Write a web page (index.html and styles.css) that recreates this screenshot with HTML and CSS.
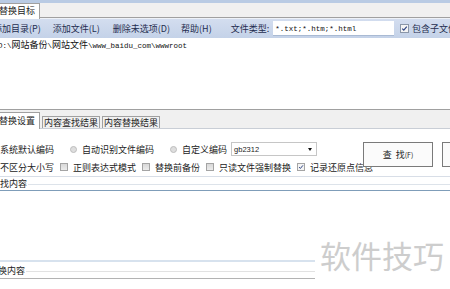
FILE: index.html
```html
<!DOCTYPE html>
<html lang="zh-CN">
<head>
    <meta charset="UTF-8">
    <title>批量替换</title>
    <link rel="stylesheet" href="styles.css">
</head>
<body>
    <div class="app">
        <div class="tabbar-top">
            <div class="tab-top">替换目标</div>
        </div>

        <div class="toolbar">
            <span class="tool first">添加目录(P)</span>
            <span class="tool">添加文件(L)</span>
            <span class="tool third">删除未选项(D)</span>
            <span class="tool help">帮助(H)</span>
            <span class="tool-label">文件类型:</span>
            <div class="type-input"><span class="mono">*.txt;*.htm;*.html</span></div>
            <span class="cb checked light">
                <svg viewBox="0 0 8 8"><path d="M1.4 4.1 L3.2 5.9 L6.6 1.8"/></svg>
            </span>
            <span class="cb-text">包含子文件夹</span>
        </div>

        <div class="filelist">
            <div class="pathline"><span class="mono">D:\</span>网站备份<span class="mono">\</span>网站文件<span class="mono">\www_baidu_com\wwwroot</span></div>
        </div>

        <div class="tabbar-low">
            <div class="tab-low active">替换设置</div>
            <div class="tab-low">内容查找结果</div>
            <div class="tab-low">内容替换结果</div>
        </div>

        <div class="options">
            <div class="opt-col">
                <div class="opt-row">
                    <span class="radio"></span>
                    <span class="opt-text">系统默认编码</span>
                    <span class="radio"></span>
                    <span class="opt-text">自动识别文件编码</span>
                    <span class="radio"></span>
                    <span class="opt-text short">自定义编码</span>
                    <div class="select">
                        <span class="mono-s">gb2312</span>
                        <span class="arrow"></span>
                    </div>
                </div>
                <div class="opt-row second">
                    <span class="cb"></span>
                    <span class="cb-label">不区分大小写</span>
                    <span class="cb"></span>
                    <span class="cb-label">正则表达式模式</span>
                    <span class="cb"></span>
                    <span class="cb-label">替换前备份</span>
                    <span class="cb"></span>
                    <span class="cb-label">只读文件强制替换</span>
                    <span class="cb checked">
                        <svg viewBox="0 0 8 8"><path d="M1.4 4.1 L3.2 5.9 L6.6 1.8"/></svg>
                    </span>
                    <span class="cb-label">记录还原点信息</span>
                </div>
            </div>
            <div class="buttons">
                <button class="btn">查&nbsp;&nbsp;找<small>(F)</small></button>
                <button class="btn">替&nbsp;&nbsp;换<small>(R)</small></button>
            </div>
        </div>

        <div class="group">
            <div class="legend"><span>查找内容</span><i></i></div>
            <div class="textbox find"></div>
        </div>

        <div class="group replace">
            <div class="legend"><span>替换内容</span><i></i></div>
            <div class="textbox"></div>
        </div>

        <div class="watermark">软件技巧</div>
    </div>
</body>
</html>
```

FILE: styles.css
```css
body {
    margin: 0;
    width: 450px;
    height: 289px;
    overflow: hidden;
    background: #fff;
    font-family: "Noto Sans CJK SC", "Noto Sans", sans-serif;
    font-size: 9px;
    color: #222;
}
.app {
    position: relative;
    margin-left: -14px;
    width: 480px;
    border-top: 3px solid #b9cbe4;
}
.mono {
    font-family: "Liberation Mono", monospace;
    font-size: 7.5px;
}
.mono-s {
    font-family: "Liberation Sans", sans-serif;
    font-size: 7.5px;
}

/* top tab strip */
.tabbar-top {
    display: flex;
    height: 14px;
    padding-left: 4px;
    background: #f0f0f0;
    border-bottom: 1px solid #a0a0a0;
}
.tab-top {
    height: 15px;
    line-height: 14px;
    padding: 0 4px 0 8px;
    background: #fff;
    border: 1px solid #a0a0a0;
    border-bottom: none;
}

/* toolbar */
.toolbar {
    display: flex;
    align-items: center;
    height: 19px;
    padding-left: 7px;
    border-top: 1px solid #eef2f8;
    background: linear-gradient(#d3ddef, #c4d2e8);
    color: #1f2d4f;
    white-space: nowrap;
}
.tool {
    margin-right: 13px;
}
.tool.first {
    margin-right: 12px;
}
.tool.third {
    margin-right: 11px;
}
.tool.help {
    margin-right: 19px;
}
.tool-label {
    margin-right: 4px;
}
.type-input {
    width: 123px;
    height: 14px;
    line-height: 14px;
    padding-left: 2px;
    background: #fff;
    border-bottom: 1px solid #a9bad3;
    margin-right: 6px;
    color: #111;
}
.cb-text {
    margin-left: 3px;
}

/* checkboxes and radios */
.cb {
    display: inline-block;
    box-sizing: border-box;
    width: 8px;
    height: 8px;
    border: 1px solid #a4a4a4;
    background: linear-gradient(#d8d8d8, #ececec);
    flex: none;
}
.cb.light {
    width: 9px;
    height: 9px;
    background: #fafafa;
    border-color: #8a96a8;
}
.cb.checked {
    background: #f4f4f4;
}
.cb svg {
    display: block;
    width: 100%;
    height: 100%;
}
.cb svg path {
    fill: none;
    stroke: #2d4382;
    stroke-width: 1.3;
}
.radio {
    display: inline-block;
    box-sizing: border-box;
    width: 7px;
    height: 7px;
    border-radius: 50%;
    border: 1px solid #bdbdbd;
    background: #dedede;
    flex: none;
}

/* file list */
.filelist {
    height: 71px;
    background: #fff;
}
.pathline {
    padding: 1px 0 0 12px;
    line-height: 11px;
    white-space: nowrap;
    color: #111;
}

/* lower tabs */
.tabbar-low {
    display: flex;
    align-items: flex-end;
    height: 18px;
    padding-left: 4px;
    background: #f0f0f0;
    border-top: 1px solid #a0a0a0;
    border-bottom: 1px solid #c9ced6;
}
.tab-low {
    box-sizing: border-box;
    height: 12px;
    line-height: 11px;
    padding: 0 1px;
    margin-left: 2px;
    background: #f0f0f0;
    border: 1px solid #a0a0a0;
    border-bottom: none;
}
.tab-low.active {
    height: 17px;
    line-height: 15px;
    margin-left: 0;
    margin-bottom: -1px;
    padding: 0 4px 0 8px;
    background: #fff;
}

/* options */
.options {
    display: flex;
    height: 35px;
    padding-top: 12px;
    border-bottom: 1px solid #d8dee7;
}
.opt-col {
    width: 377px;
    flex: none;
}
.opt-row {
    display: flex;
    align-items: center;
    height: 16px;
    padding-left: 2px;
    white-space: nowrap;
}
.opt-row.second {
    margin-top: 2px;
    padding-left: 1px;
}
.opt-text {
    margin: 0 16px 0 5px;
}
.opt-text.short {
    margin-right: 4px;
}
.select {
    position: relative;
    box-sizing: border-box;
    width: 86px;
    height: 14px;
    line-height: 12px;
    padding-left: 2px;
    border: 1px solid #c6c6c6;
    background: #fff;
}
.arrow {
    position: absolute;
    right: 4px;
    top: 5px;
    border-left: 2.5px solid transparent;
    border-right: 2.5px solid transparent;
    border-top: 3px solid #111;
}
.cb-label {
    margin: 0 6px 0 5px;
}
.buttons {
    display: flex;
    padding-top: 1px;
}
.btn {
    width: 70px;
    height: 25px;
    margin-right: 9px;
    padding: 0;
    font-family: "Noto Sans CJK SC", sans-serif;
    font-size: 9px;
    color: #222;
    background: #fbfbfb;
    border: 1px solid #7a7a7a;
    border-radius: 0;
}
.btn small {
    font-size: 7px;
}

/* text groups */
.legend {
    display: flex;
    align-items: center;
    height: 13px;
    padding-left: 5px;
}
.legend span {
    padding-right: 1px;
    line-height: 13px;
}
.legend i {
    flex: 1;
    height: 0;
    border-top: 1px solid #dde3ea;
    margin-top: 1px;
}
.textbox {
    height: 69px;
    border-top: 1px solid #b3b3b3;
}
.textbox.find {
    border-top-color: #7f9db9;
    border-bottom: 2px solid #d7e2ee;
}
.replace .legend {
    height: 16px;
    padding-left: 3px;
}
.replace .legend i {
    margin-top: 3px;
    border-top-color: #e2e2e2;
}

.watermark {
    position: absolute;
    left: 329px;
    top: 229px;
    width: 130px;
    height: 50px;
    padding: 7px 0 0 5px;
    background: #fff;
    font-size: 31px;
    line-height: 31px;
    color: #cdcdcd;
    white-space: nowrap;
}
```
